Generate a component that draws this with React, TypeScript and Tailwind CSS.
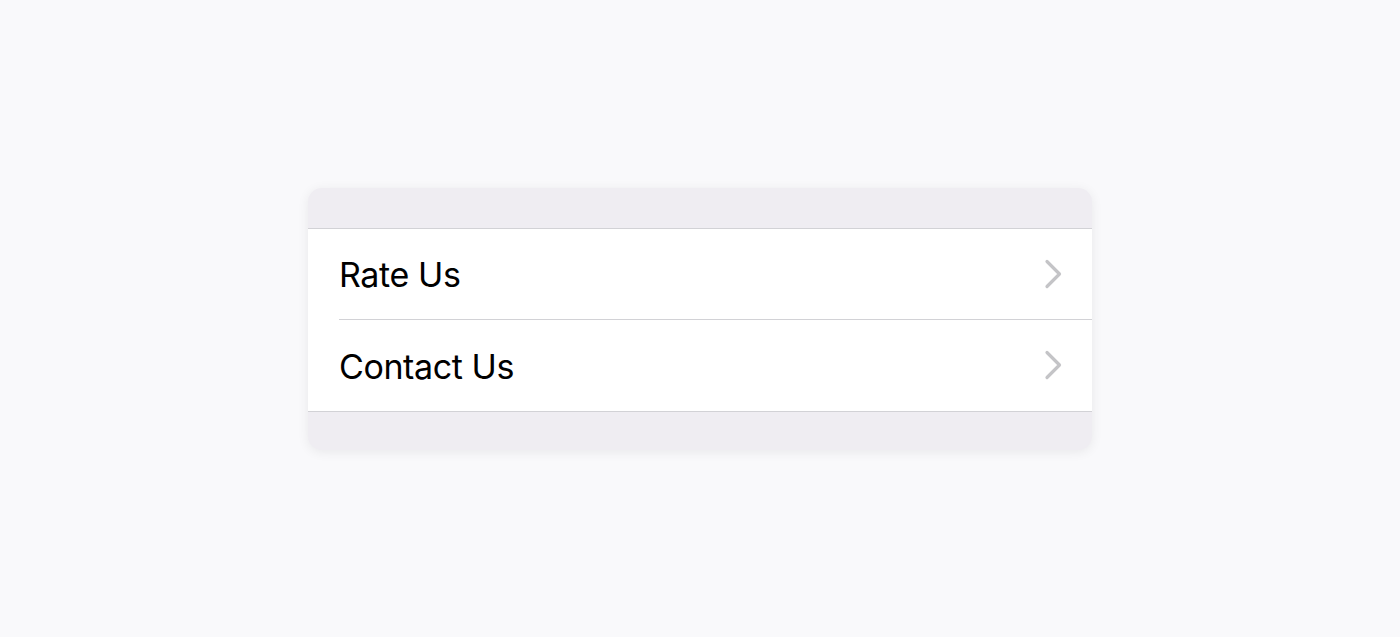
import React from "react";

const rows = ["Rate Us", "Contact Us"];

const Chevron = () => (
  <svg width="22" height="32" viewBox="0 0 22 32" fill="none">
    <path d="M5 3.5 L17.5 16 L5 28.5" stroke="#c4c4c7" strokeWidth="3.2" strokeLinecap="round" strokeLinejoin="round" />
  </svg>
);

export default function App() {
  return (
    <div className="w-full h-[637px] bg-[#f9f9fb] flex items-center justify-center">
      <div className="w-[784px] rounded-[14px] overflow-hidden bg-[#efedf2] shadow-[0_2px_12px_rgba(0,0,0,0.07)]">
        <div className="h-[40px]" />
        <div className="bg-white border-t border-b border-[#d2d2d6]">
          {rows.map((label, i) => (
            <div key={label} className="pl-[31px]">
              <div
                className={
                  "h-[91px] flex items-center justify-between pr-[28px] " +
                  (i < rows.length - 1 ? "border-b border-[#d2d2d6]" : "")
                }
              >
                <span className="text-[34px] text-black font-['Inter',sans-serif] tracking-[-0.4px] pt-[2px]">
                  {label}
                </span>
                <Chevron />
              </div>
            </div>
          ))}
        </div>
        <div className="h-[38px]" />
      </div>
    </div>
  );
}
